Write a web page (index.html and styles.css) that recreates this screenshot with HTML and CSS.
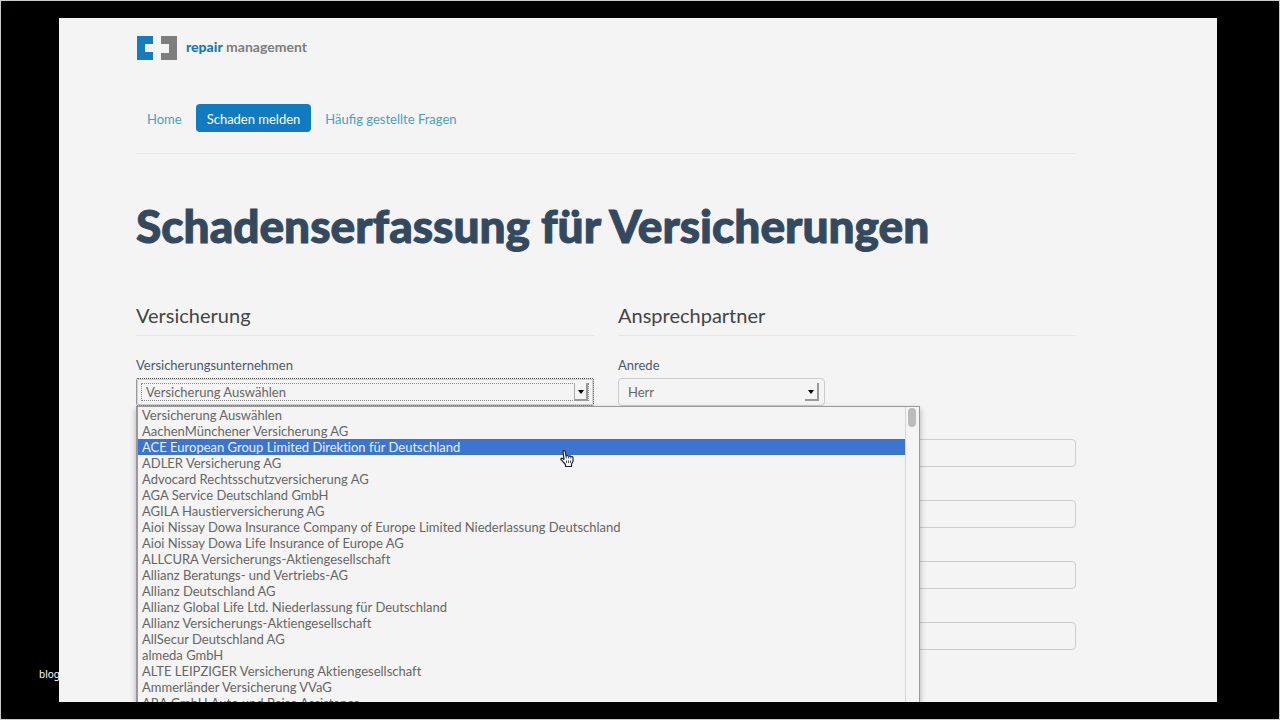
FILE: index.html
```html
<!DOCTYPE html>
<html lang="de">
<head>
  <meta charset="utf-8">
  <title>Schadenserfassung für Versicherungen</title>
  <link rel="stylesheet" href="styles.css">
</head>
<body>
  <span class="watermark">blog</span>
  <div class="screen">
    <header class="header">
      <a class="logo" href="#">
        <svg width="41" height="24" viewBox="0 0 41 24">
          <path d="M1 0h16v8H9v8h8v8H1z" fill="#177bbf"/>
          <path d="M25 0h16v24H25v-7h8V8h-8z" fill="#7d7d7d"/>
        </svg>
        <span><b>repair</b> management</span>
      </a>
      <nav class="navbar">
        <a href="#">Home</a>
        <a href="#" class="active">Schaden melden</a>
        <a href="#">Häufig gestellte Fragen</a>
      </nav>
    </header>

    <h1>Schadenserfassung für Versicherungen</h1>

    <form class="columns">
      <section>
        <h2>Versicherung</h2>
        <label for="company">Versicherungsunternehmen</label>
        <div class="select-box open">
          <select id="company" name="company">
            <option>Versicherung Auswählen</option>
          </select>
          <span class="arrow"></span>
          <div class="dropdown">
            <ul role="listbox" aria-label="Versicherungsunternehmen">
              <li role="option">Versicherung Auswählen</li>
              <li role="option">AachenMünchener Versicherung AG</li>
              <li role="option" class="selected" aria-selected="true">ACE European Group Limited Direktion für Deutschland</li>
              <li role="option">ADLER Versicherung AG</li>
              <li role="option">Advocard Rechtsschutzversicherung AG</li>
              <li role="option">AGA Service Deutschland GmbH</li>
              <li role="option">AGILA Haustierversicherung AG</li>
              <li role="option">Aioi Nissay Dowa Insurance Company of Europe Limited Niederlassung Deutschland</li>
              <li role="option">Aioi Nissay Dowa Life Insurance of Europe AG</li>
              <li role="option">ALLCURA Versicherungs-Aktiengesellschaft</li>
              <li role="option">Allianz Beratungs- und Vertriebs-AG</li>
              <li role="option">Allianz Deutschland AG</li>
              <li role="option">Allianz Global Life Ltd. Niederlassung für Deutschland</li>
              <li role="option">Allianz Versicherungs-Aktiengesellschaft</li>
              <li role="option">AllSecur Deutschland AG</li>
              <li role="option">almeda GmbH</li>
              <li role="option">ALTE LEIPZIGER Versicherung Aktiengesellschaft</li>
              <li role="option">Ammerländer Versicherung VVaG</li>
              <li role="option">ARA GmbH Auto und Reise Assistance</li>
            </ul>
            <div class="scrollbar"><div class="thumb"></div></div>
            <svg class="cursor" width="14" height="18" viewBox="0 0 14 18">
              <path d="M3 1.500c0-1.300 2-1.300 2.200 0L6 6l1.500-.5 1 .6 1.500-.3 1 .8c1.300-.3 2 .3 2 1.600v3.300L11.500 14v2.500h-6V14.500L1 9.700c-.6-1 .6-2 1.600-1.200L4 9.500z" fill="#fff" stroke="#223" stroke-width="1.200" stroke-linejoin="round"/>
              <path d="M6.500 10.500v2.500M8.500 10.500v2.500M10.500 10.500v2.500M6.200 6v2.500M8.500 6.500v2M10.800 7v1.500" fill="none" stroke="#223" stroke-width="0.800"/>
            </svg>
          </div>
        </div>
      </section>

      <section>
        <h2>Ansprechpartner</h2>
        <label for="title">Anrede</label>
        <div class="select-box small">
          <select id="title" name="title">
            <option>Herr</option>
          </select>
          <span class="arrow"></span>
        </div>
        <div class="fields">
          <input type="text" name="firstname" aria-label="Vorname">
          <input type="text" name="lastname" aria-label="Nachname">
          <input type="text" name="phone" aria-label="Telefon">
          <input type="text" name="email" aria-label="E-Mail">
        </div>
      </section>
    </form>
  </div>
</body>
</html>
```
FILE: styles.css
```css
* {
  box-sizing: border-box;
}

body {
  margin: 0;
  height: 100vh;
  padding: 17px 62px 17px 58px;
  border: 1px solid #c8cccb;
  background: #000;
  color: #34495e;
  font-family: Lato, "Liberation Sans", sans-serif;
  font-size: 13px;
  overflow: hidden;
}

.watermark {
  position: absolute;
  left: 39px;
  bottom: 39px;
  color: #fff;
  font-family: "Noto Sans", sans-serif;
  font-size: 10px;
  line-height: 14px;
}

.screen {
  position: relative;
  height: 100%;
  padding: 18px 141px 0 77px;
  background: #f4f4f4;
  overflow: hidden;
}

.logo {
  display: flex;
  align-items: center;
  gap: 9px;
  height: 24px;
  color: #7d7d7d;
  font-size: 14px;
  font-weight: bold;
  text-decoration: none;
}

.logo span {
  padding-bottom: 4px;
}

.logo b {
  color: #177baf;
}

.navbar {
  display: flex;
  gap: 3px;
  margin-top: 44px;
  padding-bottom: 21px;
  border-bottom: 1px solid #e9e9e9;
}

.navbar a {
  padding: 2px 11px 0;
  border-radius: 4px;
  color: #4a9fc0;
  line-height: 26px;
  text-decoration: none;
}

.navbar .active {
  background: #117ac0;
  color: #fff;
}

h1 {
  margin: 42px 0 45px;
  font-size: 46px;
  font-weight: 900;
  line-height: 60px;
  -webkit-text-stroke: 1px #34495e;
}

.columns {
  display: grid;
  grid-template-columns: 1fr 1fr;
  gap: 24px;
}

h2 {
  margin: 0 0 20px;
  padding-bottom: 6px;
  border-bottom: 1px solid #e6e6e6;
  color: #444;
  font-size: 20px;
  font-weight: normal;
  line-height: 28px;
}

label {
  display: block;
  margin-bottom: 4px;
  color: #4a5a6a;
  line-height: 18px;
}

.select-box {
  position: relative;
  height: 28px;
}

.select-box.small {
  width: 207px;
}

select {
  appearance: none;
  width: 100%;
  height: 28px;
  padding: 0 9px;
  border: 1px solid #ccc;
  border-radius: 4px;
  background: #f4f4f4;
  color: #666;
  font: inherit;
}

.open select {
  padding: 0 9px;
  border: 1px dotted #444;
  border-radius: 2px;
  box-shadow: inset 0 0 0 1px #d0d0d0;
  outline: 1px dotted #888;
  outline-offset: -6px;
}

.arrow {
  position: absolute;
  top: 5px;
  right: 6px;
  width: 14px;
  height: 18px;
  border-right: 2px solid #999;
  border-bottom: 2px solid #999;
  background: #f4f4f4;
}

.open .arrow {
  border-left: 1px solid #aaa;
}

.arrow::after {
  content: "";
  position: absolute;
  top: 7px;
  left: 3px;
  border: 3px solid transparent;
  border-top: 4px solid #000;
}

.dropdown {
  position: absolute;
  top: 28px;
  left: 0;
  display: flex;
  width: 784px;
  border: 1px solid #999;
  border-left: 2px solid #999;
  background: #f4f4f4;
  box-shadow: 0 3px 6px rgba(0, 0, 0, 0.3);
  z-index: 2;
}

.dropdown ul {
  flex: 1;
  margin: 0;
  padding: 0;
  list-style: none;
}

.dropdown li {
  padding-left: 4px;
  color: #666;
  line-height: 16px;
  font-variant-ligatures: none;
}

.dropdown .selected {
  background: #3c74cf;
  color: #e8f0ff;
}

.scrollbar {
  width: 14px;
  padding: 1px 2px;
  border-left: 1px solid #d5d5d5;
}

.thumb {
  width: 8px;
  height: 19px;
  border-radius: 4px;
  background: #bbb;
}

.cursor {
  position: absolute;
  top: 43px;
  left: 422px;
}

.fields {
  display: grid;
  gap: 33px;
  margin-top: 33px;
}

.fields input {
  width: 100%;
  height: 28px;
  padding: 0 8px;
  border: 1px solid #ccc;
  border-radius: 4px;
  background: #f4f4f4;
  font: inherit;
}
```
